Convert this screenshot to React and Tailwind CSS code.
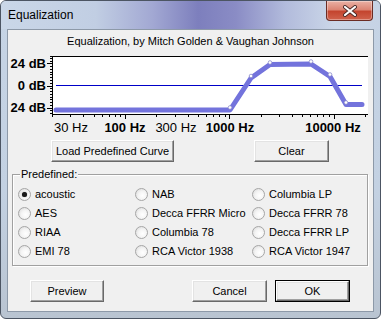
import React from 'react';

const font = "font-['Liberation_Sans',Arial,sans-serif]";

const btn =
  'h-[22px] bg-[#f0f0f0] text-[11px] text-black border border-t-white border-l-white border-r-[#696969] border-b-[#696969] shadow-[inset_-1px_-1px_0_#a0a0a0,inset_1px_1px_0_#e3e3e3] flex items-center justify-center';

const fx = (f) => 125 + 104.3 * (Math.log10(f) - 2);
const dy = (d) => 85.5 - d * 0.917;

const freqTicks = [];
[10, 100, 1000, 10000].forEach((dec) => {
  for (let m = 1; m <= 9; m++) {
    const f = m * dec;
    if (f >= 20 && f <= 20000) freqTicks.push({ x: Math.round(fx(f)) + 0.5, major: m === 1 });
  }
});

const dbTicks = [];
for (let d = -30; d <= 30; d += 3) dbTicks.push({ y: Math.round(dy(d)) + 0.5, major: d % 24 === 0 });

const curve = [
  [56, 110],
  [230, 110],
  [251, 78],
  [270, 64.5],
  [311, 64],
  [330, 76.5],
  [346, 104.5],
  [362, 104.5],
];
const markers = [
  [230, 107.5],
  [251, 76],
  [270, 62.5],
  [311, 61.5],
  [330, 74.5],
  [346, 102.5],
];

const Chart = () => {
  return (
    <svg width="365" height="88" viewBox="8 48 365 88" className="block">
      <rect x="53" y="57" width="315" height="57" fill="#fff" />
      <line x1="50" y1="56.5" x2="368" y2="56.5" stroke="#000" />
      <line x1="52.5" y1="56" x2="52.5" y2="115" stroke="#000" />
      <line x1="52" y1="114.5" x2="368" y2="114.5" stroke="#000" />
      {dbTicks.map((t, i) => (
        <line key={i} x1={t.major ? 47 : 50} y1={t.y} x2="52" y2={t.y} stroke="#000" />
      ))}
      {freqTicks.map((t, i) => (
        <line key={i} x1={t.x} y1="115" x2={t.x} y2={t.major ? 119 : 117} stroke="#000" />
      ))}
      <line x1="56" y1="85.5" x2="362" y2="85.5" stroke="#0000c8" />
      <polyline
        points={curve.map((p) => p.join(',')).join(' ')}
        fill="none"
        stroke="#7373dc"
        strokeWidth="5"
        strokeLinejoin="round"
        strokeLinecap="round"
      />
      {markers.map(([x, y], i) => (
        <circle key={i} cx={x} cy={y} r="1.8" fill="#fff" stroke="#8a8acc" strokeWidth="0.8" />
      ))}
      <g fontFamily="Liberation Sans, Arial, sans-serif" fontSize="13" fontWeight="bold" textAnchor="end">
        <text x="46" y="68">24 dB</text>
        <text x="46" y="90">0 dB</text>
        <text x="46" y="112">24 dB</text>
      </g>
      <g fontFamily="Liberation Sans, Arial, sans-serif" fontSize="13" textAnchor="middle">
        <text x="71" y="132">30 Hz</text>
        <text x="125" y="132" fontWeight="bold">100 Hz</text>
        <text x="176" y="132">300 Hz</text>
        <text x="230" y="132" fontWeight="bold">1000 Hz</text>
        <text x="333" y="132" fontWeight="bold">10000 Hz</text>
      </g>
    </svg>
  );
};

const Radio = ({ label, checked }) => (
  <div className="h-[19px] flex items-center gap-[4px]">
    <span className="w-[13px] h-[13px] rounded-full border border-[#a6a6a6] bg-[radial-gradient(circle_at_60%_60%,#ffffff_0%,#f4f4f4_45%,#d6d6d6_100%)] flex items-center justify-center">
      {checked && <span className="w-[5px] h-[5px] rounded-full bg-[#1a1a1a] shadow-[0_0_1px_#555]" />}
    </span>
    <span className="text-[11px] leading-[13px] text-black whitespace-nowrap">{label}</span>
  </div>
);

const presets = [
  ['acoustic', 'NAB', 'Columbia LP'],
  ['AES', 'Decca FFRR Micro', 'Decca FFRR 78'],
  ['RIAA', 'Columbia 78', 'Decca FFRR LP'],
  ['EMI 78', 'RCA Victor 1938', 'RCA Victor 1947'],
];

export default function App() {
  return (
    <div className={`${font} w-[381px] h-[319px] flex flex-col rounded-[6px] border border-[#4c5563] bg-[linear-gradient(180deg,#c6d4e5_0%,#c3d1e2_60%,#b9c4d1_100%)] overflow-hidden`}>
      <div className="h-[28px] relative flex items-center pl-[7px] bg-[linear-gradient(90deg,#cad7e8_0%,#c1cee3_25%,#a2a8d3_40%,#7d7fbd_52%,#8a8cc5_62%,#b2bbdc_75%,#cbd7e8_88%,#c6d3e5_100%)]">
        <span className="text-[12px] text-black pb-[1px]">Equalization</span>
        <div className="absolute right-[7px] top-0 w-[47px] h-[20px] rounded-b-[4px] border border-t-0 border-[#6b2c24] bg-[linear-gradient(180deg,#eab1a5_0%,#dc8574_45%,#c4452f_55%,#d0624c_100%)] shadow-[inset_0_0_0_1px_rgba(255,255,255,0.35)] flex items-center justify-center">
          <svg width="16" height="12" viewBox="0 0 16 12">
            <path d="M3 2 L13 10 M13 2 L3 10" stroke="#4a2a28" strokeWidth="4" strokeLinecap="round" />
            <path d="M3 2 L13 10 M13 2 L3 10" stroke="#fff" strokeWidth="2.2" strokeLinecap="round" />
          </svg>
        </div>
      </div>
      <div className="mx-[6px] mb-[6px] flex-1 border border-[#8d99a8] bg-[#f0f0f0] flex flex-col">
        <div className="pt-[5px] text-[11px] leading-[13px] text-center text-black">
          Equalization, by Mitch Golden &amp; Vaughan Johnson
        </div>
        <Chart />
        <div className="mt-[4px] flex">
          <button className={`${btn} ml-[43px] w-[123px] h-[21px]`}>Load Predefined Curve</button>
          <button className={`${btn} ml-[80px] w-[75px] h-[21px]`}>Clear</button>
        </div>
        <fieldset className="mt-[6px] ml-[4px] w-[356px] border border-[#a0a0a0] shadow-[1px_1px_0_#fff,inset_1px_1px_0_#fff] pl-[5px] pb-[4px]">
          <legend className="ml-[2px] px-[1px] bg-[#f0f0f0] text-[11px] leading-[13px] text-black">Predefined:</legend>
          <div className="pt-[4px] grid grid-cols-[117px_117px_1fr]">
            {presets.flat().map((p) => (
              <Radio key={p} label={p} checked={p === 'acoustic'} />
            ))}
          </div>
        </fieldset>
        <div className="mt-[14px] flex">
          <button className={`${btn} ml-[22px] w-[74px]`}>Preview</button>
          <button className={`${btn} ml-[88px] w-[75px]`}>Cancel</button>
          <div className="ml-[8px] w-[75px] h-[22px] border border-black">
            <button className={`${btn} w-full h-full`}>OK</button>
          </div>
        </div>
      </div>
    </div>
  );
}
